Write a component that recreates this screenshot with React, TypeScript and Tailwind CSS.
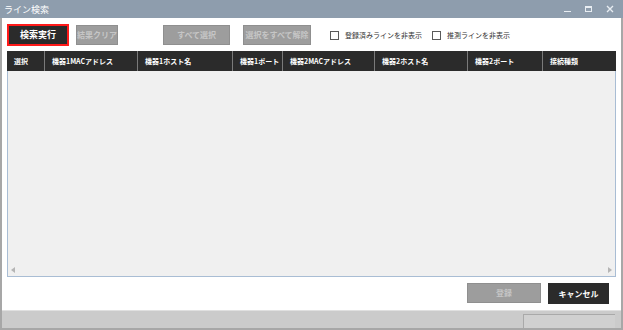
import React from "react";

const columns = [
  { label: "選択", width: 37 },
  { label: "機器1MACアドレス", width: 93 },
  { label: "機器1ホスト名", width: 95 },
  { label: "機器1ポート", width: 50 },
  { label: "機器2MACアドレス", width: 92 },
  { label: "機器2ホスト名", width: 93 },
  { label: "機器2ポート", width: 75 },
  { label: "接続種類", width: 74 },
];

function GrayButton({ label, width }: { label: string; width: string }) {
  return (
    <div
      className={`${width} flex h-[20px] items-center justify-center border border-[#8f8f8f] bg-[#9d9d9d] text-[8px] font-bold text-[#c6c6c6]`}
    >
      {label}
    </div>
  );
}

function CheckOption({ label }: { label: string }) {
  return (
    <label className="flex items-center">
      <span className="h-[9px] w-[9px] border border-[#5a5a5a] bg-white" />
      <span className="ml-[6px] whitespace-nowrap text-[7px] text-[#333]">{label}</span>
    </label>
  );
}

export default function App() {
  return (
    <div
      className="flex h-[330px] w-[623px] flex-col bg-[#a7a7a7]"
      style={{ fontFamily: '"Noto Sans CJK JP", "Liberation Sans", sans-serif' }}
    >
      {/* title bar */}
      <div className="flex h-[18px] items-center justify-between bg-[#8e9dad] pl-[4px] pr-[9px]">
        <span className="text-[9px] leading-none text-white">ライン検索</span>
        <div className="flex items-center gap-[14px] text-[#e8edf2]">
          <span className="h-[1px] w-[7px] translate-y-[2px] bg-[#e8edf2]" />
          <span className="h-[6px] w-[7px] border border-[#e8edf2] border-t-2" />
          <svg width="8" height="8" viewBox="0 0 8 8">
            <path d="M1 1 L7 7 M7 1 L1 7" stroke="#e8edf2" strokeWidth="1.4" />
          </svg>
        </div>
      </div>

      <div className="mx-[2px] flex flex-1 flex-col bg-white">
        {/* toolbar */}
        <div className="mt-[6px] flex h-[22px] items-center pl-[5px]">
          <button className="flex h-[22px] w-[62px] items-center justify-center border-2 border-[#ff1a1a] bg-[#2b2b2b] text-[9px] font-bold text-white">
            検索実行
          </button>
          <div className="ml-[7px]">
            <GrayButton label="結果クリア" width="w-[42px]" />
          </div>
          <div className="ml-[45px]">
            <GrayButton label="すべて選択" width="w-[67px]" />
          </div>
          <div className="ml-[13px]">
            <GrayButton label="選択をすべて解除" width="w-[68px]" />
          </div>
          <div className="ml-[19px]">
            <CheckOption label="登録済みラインを非表示" />
          </div>
          <div className="ml-[10px]">
            <CheckOption label="推測ラインを非表示" />
          </div>
        </div>

        {/* table */}
        <div className="mx-[5px] mt-[5px] flex h-[226px] flex-col">
          <div className="flex h-[20px] bg-[#2b2b2b]">
            {columns.map((c, i) => (
              <div
                key={c.label}
                className={`flex items-center overflow-hidden whitespace-nowrap pl-[7px] text-[7px] font-bold text-white ${
                  i > 0 ? "border-l border-[#7a7a7a]" : ""
                }`}
                style={{ width: c.width }}
              >
                {c.label}
              </div>
            ))}
          </div>
          <div className="flex flex-1 flex-col border-x border-b border-[#a9bdd4] bg-[#f0f0f0]">
            <div className="flex-1" />
            <div className="flex h-[10px] items-center justify-between px-[3px] pb-[3px]">
              <svg width="4" height="6" viewBox="0 0 4 6">
                <path d="M4 0 L0 3 L4 6 Z" fill="#b5b5b5" />
              </svg>
              <svg width="4" height="6" viewBox="0 0 4 6">
                <path d="M0 0 L4 3 L0 6 Z" fill="#b5b5b5" />
              </svg>
            </div>
          </div>
        </div>

        {/* footer buttons */}
        <div className="mt-[6px] flex justify-end pr-[12px]">
          <div className="flex h-[20px] w-[74px] items-center justify-center border border-[#8f8f8f] bg-[#9d9d9d] text-[8px] font-bold text-[#c6c6c6]">
            登録
          </div>
          <button className="ml-[7px] flex h-[21px] w-[61px] items-center justify-center bg-[#2b2b2b] text-[8px] font-bold text-white">
            キャンセル
          </button>
        </div>
        <div className="flex-1" />

        {/* status bar */}
        <div className="flex h-[18px] items-end justify-end border-t border-[#e0e0e0] bg-[#cbcbcb] pr-[6px]">
          <div className="h-[14px] w-[92px] border-l border-t border-[#a9a9a9] bg-[#d0d0d0]" />
        </div>
      </div>
      <div className="h-[2px]" />
    </div>
  );
}
